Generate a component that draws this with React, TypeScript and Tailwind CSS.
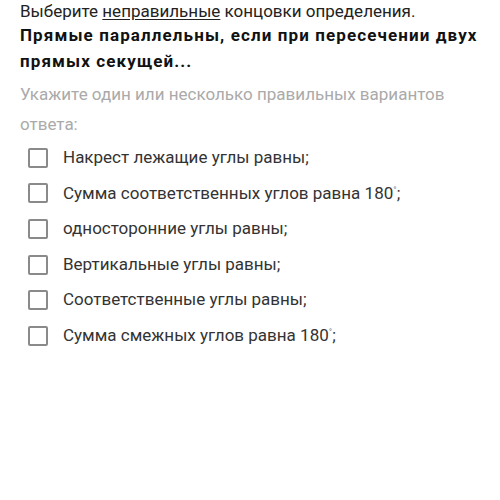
import React from 'react';

const options = [
  { text: 'Накрест лежащие углы равны;' },
  { text: 'Сумма соответственных углов равна 180', deg: true },
  { text: 'односторонние углы равны;' },
  { text: 'Вертикальные углы равны;' },
  { text: 'Соответственные углы равны;' },
  { text: 'Сумма смежных углов равна 180', deg: true },
];

export default function App() {
  return (
    <div className="w-[500px] h-[500px] bg-white px-5 font-['Roboto',sans-serif]">
      <p className="text-[17px] leading-[24px] text-[#222] -mt-[1px]">
        Выберите <span className="underline underline-offset-2">неправильные</span> концовки определения.
      </p>
      <p className="text-[17px] leading-[26px] font-bold tracking-[0.065em] text-[#111] -mt-[1px] -mr-4">
        Прямые параллельны, если при пересечении двух прямых секущей...
      </p>
      <p className="text-[17px] leading-[30px] text-[#aaaaaa] mt-[5px]">
        Укажите один или несколько правильных вариантов ответа:
      </p>
      <div className="mt-[1px] flex flex-col pl-2">
        {options.map((o, i) => (
          <label key={i} className="flex items-center h-[35.6px] gap-[15px]">
            <span className="w-[20px] h-[20px] border-2 border-[#8a8a8a] rounded-[2px] shrink-0" />
            <span className="text-[17px] text-[#333]">
              {o.text}
              {o.deg && (
                <>
                  <span className="relative -top-[6px] text-[9px] text-[#777]">°</span>;
                </>
              )}
            </span>
          </label>
        ))}
      </div>
    </div>
  );
}
